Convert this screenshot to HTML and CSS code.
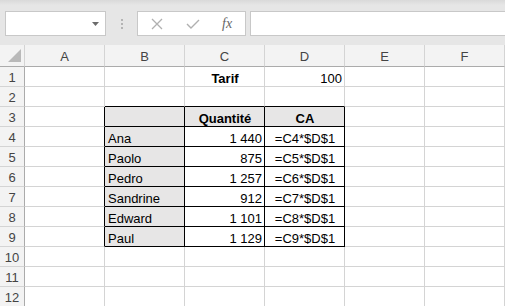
FILE: index.html
```html
<!DOCTYPE html>
<html lang="fr">
<head>
<meta charset="utf-8">
<title>Feuille</title>
<link rel="stylesheet" href="styles.css">
</head>
<body>
<div class="app">
  <div class="toolbar">
    <div class="namebox">
      <svg class="drop" width="7" height="4" viewBox="0 0 7 4"><path d="M0 0H7L3.5 4Z" fill="#6b6b6b"/></svg>
    </div>
    <div class="grip"><span></span><span></span><span></span></div>
    <div class="fbuttons">
      <svg class="ico" width="12" height="12" viewBox="0 0 12 12"><path d="M1 1L11 11M11 1L1 11" stroke="#b0b0b0" stroke-width="1.3" fill="none"/></svg>
      <svg class="ico" width="14" height="12" viewBox="0 0 14 12"><path d="M1 6L5 10L13 2" stroke="#b0b0b0" stroke-width="1.4" fill="none"/></svg>
      <span class="fx">fx</span>
    </div>
    <div class="fbar"></div>
  </div>
  <div class="sheet">
    <div class="hd corner"><svg width="13" height="13" viewBox="0 0 13 13"><path d="M13 0V13H0Z" fill="#b9b9b9"/></svg></div>
    <div class="hd col">A</div><div class="hd col">B</div><div class="hd col">C</div><div class="hd col">D</div><div class="hd col">E</div><div class="hd col">F</div>

    <div class="hd row">1</div><div class="c"></div><div class="c"></div><div class="c b ctr">Tarif</div><div class="c r">100</div><div class="c"></div><div class="c"></div>
    <div class="hd row">2</div><div class="c"></div><div class="c kb"></div><div class="c kb"></div><div class="c kb"></div><div class="c"></div><div class="c"></div>
    <div class="hd row">3</div><div class="c kr"></div><div class="c t g"></div><div class="c t g b ctr">Quantité</div><div class="c t g b ctr">CA</div><div class="c"></div><div class="c"></div>
    <div class="hd row">4</div><div class="c kr"></div><div class="c t g">Ana</div><div class="c t r">1 440</div><div class="c t ctr">=C4*$D$1</div><div class="c"></div><div class="c"></div>
    <div class="hd row">5</div><div class="c kr"></div><div class="c t g">Paolo</div><div class="c t r">875</div><div class="c t ctr">=C5*$D$1</div><div class="c"></div><div class="c"></div>
    <div class="hd row">6</div><div class="c kr"></div><div class="c t g">Pedro</div><div class="c t r">1 257</div><div class="c t ctr">=C6*$D$1</div><div class="c"></div><div class="c"></div>
    <div class="hd row">7</div><div class="c kr"></div><div class="c t g">Sandrine</div><div class="c t r">912</div><div class="c t ctr">=C7*$D$1</div><div class="c"></div><div class="c"></div>
    <div class="hd row">8</div><div class="c kr"></div><div class="c t g">Edward</div><div class="c t r">1 101</div><div class="c t ctr">=C8*$D$1</div><div class="c"></div><div class="c"></div>
    <div class="hd row">9</div><div class="c kr"></div><div class="c t g">Paul</div><div class="c t r">1 129</div><div class="c t ctr">=C9*$D$1</div><div class="c"></div><div class="c"></div>
    <div class="hd row">10</div><div class="c"></div><div class="c"></div><div class="c"></div><div class="c"></div><div class="c"></div><div class="c"></div>
    <div class="hd row">11</div><div class="c"></div><div class="c"></div><div class="c"></div><div class="c"></div><div class="c"></div><div class="c"></div>
    <div class="hd row">12</div><div class="c"></div><div class="c"></div><div class="c"></div><div class="c"></div><div class="c"></div><div class="c"></div>
  </div>
</div>
</body>
</html>
```

FILE: styles.css
```css
* { box-sizing: border-box; }
html, body { margin: 0; padding: 0; }
body {
  width: 505px;
  height: 306px;
  overflow: hidden;
  background: #ffffff;
  font-family: "Liberation Sans", Arial, sans-serif;
  font-size: 13px;
  color: #000;
}
.app { width: 505px; height: 306px; overflow: hidden; }

.toolbar {
  height: 45px;
  background: linear-gradient(#d9d9d9 0, #e6e6e6 5px, #e6e6e6 100%);
  display: flex;
  align-items: flex-start;
  padding-top: 11px;
}
.namebox {
  margin-left: 5px;
  width: 101px;
  height: 25px;
  background: #fff;
  border: 1px solid #c8c8c8;
  display: flex;
  align-items: center;
  justify-content: flex-end;
  padding-right: 6px;
}
.grip {
  width: 31px;
  height: 25px;
  display: flex;
  flex-direction: column;
  align-items: center;
  justify-content: center;
  gap: 2px;
}
.grip span { width: 2px; height: 2px; background: #b4b4b4; display: block; }
.fbuttons {
  width: 109px;
  height: 25px;
  background: #fff;
  border: 1px solid #c8c8c8;
  display: flex;
  align-items: center;
  padding-left: 13px;
  gap: 23px;
}
.fx {
  font-family: "Liberation Serif", "Times New Roman", serif;
  font-style: italic;
  font-size: 14px;
  color: #666;
  margin-left: -1px;
}
.fbar {
  margin-left: 4px;
  flex: 1;
  height: 25px;
  background: #fff;
  border: 1px solid #c8c8c8;
  border-right: none;
}

.sheet {
  display: grid;
  grid-template-columns: 25px repeat(6, 80px);
  grid-template-rows: 22px repeat(12, 20px);
}
.hd {
  background: #f3f3f3;
  color: #444;
  display: flex;
  align-items: center;
  justify-content: center;
  font-size: 13px;
}
.corner {
  border-right: 1px solid #d4d4d4;
  border-bottom: 1px solid #ababab;
  align-items: flex-end;
  justify-content: flex-end;
  padding: 0 3px 4px 0;
}
.col {
  border-right: 1px solid #d4d4d4;
  border-bottom: 1px solid #ababab;
  padding-top: 1px;
}
.row {
  border-right: 1px solid #ababab;
  border-bottom: 1px solid #d4d4d4;
  padding-top: 2px;
}
.c {
  border-right: 1px solid #d4d4d4;
  border-bottom: 1px solid #d4d4d4;
  display: flex;
  align-items: flex-end;
  padding: 0 2px 0 3px;
  line-height: 15px;
  white-space: nowrap;
  overflow: hidden;
}
.c.t { border-right-color: #000; border-bottom-color: #000; }
.c.kr { border-right-color: #000; }
.c.kb { border-bottom-color: #000; }
.c.g { background: #e7e6e6; }
.c.b { font-weight: bold; }
.c.r { justify-content: flex-end; }
.c.ctr { justify-content: center; }
```
